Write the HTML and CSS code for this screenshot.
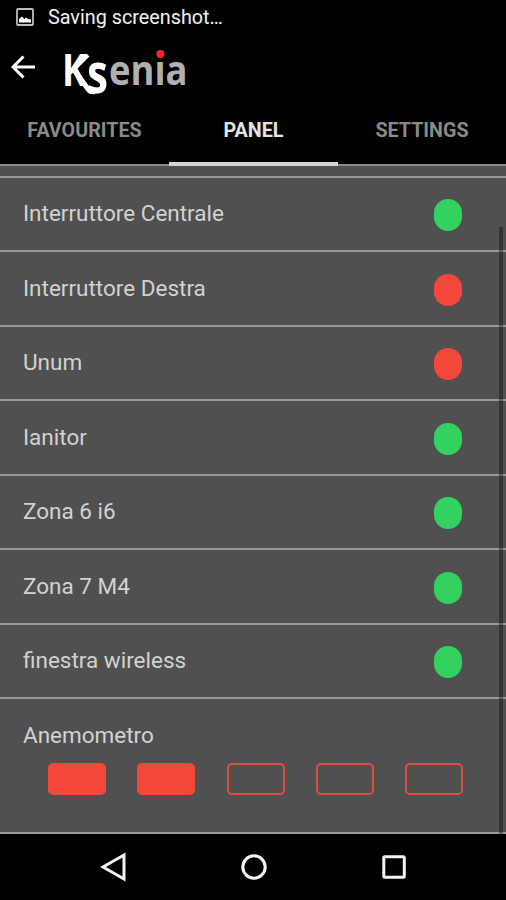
FILE: index.html
```html
<!DOCTYPE html>
<html lang="en">
<head>
    <meta charset="UTF-8">
    <meta name="viewport" content="width=device-width, initial-scale=1.0">
    <title>Ksenia</title>
    <link rel="stylesheet" href="styles.css">
</head>
<body>
    <div class="statusbar">
        <svg width="18" height="18" viewBox="0 0 18 18">
            <rect x="1" y="1" width="16" height="16" rx="1" fill="none" stroke="#bdbdbd" stroke-width="1.800"/>
            <path d="M3 14.500V11l3-2.500 2.500 2.500 1.500-1.500 2 1.500 3 0.500v3z" fill="#fff"/>
        </svg>
        <span class="statustext">Saving screenshot…</span>
    </div>
    <div class="header">
        <svg class="back" width="24" height="24" viewBox="0 0 24 24" fill="none" stroke="#fff" stroke-width="3">
            <path d="M12.500 1.500L2 12l10.500 10.500M2.500 12H24"/>
        </svg>
        <svg class="logo" width="150" height="76" viewBox="0 0 150 76">
            <text class="logo-k" x="7" y="51.500" textLength="24.500" lengthAdjust="spacingAndGlyphs">K</text>
            <text class="logo-s" x="32" y="59" textLength="21" lengthAdjust="spacingAndGlyphs">s</text>
            <!-- leg of the K runs into the tail of the s -->
            <path d="M18 34L33 55Q35 58.500 40 57.500" fill="none" stroke="#fff" stroke-width="5"/>
            <path d="M19 35L33 21" fill="none" stroke="#fff" stroke-width="4"/>
            <text class="logo-e" x="54" y="51" textLength="78.500" lengthAdjust="spacingAndGlyphs">enia</text>
            <rect x="99" y="10" width="13" height="16" fill="#000"/>
            <circle cx="105.500" cy="20" r="4" fill="#ee2a20"/>
        </svg>
    </div>
    <div class="tabs">
        <div class="tab">FAVOURITES</div>
        <div class="tab active">PANEL</div>
        <div class="tab">SETTINGS</div>
    </div>
    <div class="content">
        <ul class="zones">
            <li class="zone"><span>Interruttore Centrale</span><i class="dot green"></i></li>
            <li class="zone"><span>Interruttore Destra</span><i class="dot red"></i></li>
            <li class="zone"><span>Unum</span><i class="dot red"></i></li>
            <li class="zone"><span>Ianitor</span><i class="dot green"></i></li>
            <li class="zone"><span>Zona 6 i6</span><i class="dot green"></i></li>
            <li class="zone"><span>Zona 7 M4</span><i class="dot green"></i></li>
            <li class="zone"><span>finestra wireless</span><i class="dot green"></i></li>
            <li class="zone meter">
                <span>Anemometro</span>
                <div class="levels">
                    <i class="level on"></i>
                    <i class="level on"></i>
                    <i class="level"></i>
                    <i class="level"></i>
                    <i class="level"></i>
                </div>
            </li>
        </ul>
        <div class="scrollbar"></div>
    </div>
    <div class="navbar">
        <svg width="28" height="30" viewBox="0 0 28 30">
            <path d="M24 3v24L3 15z"/>
        </svg>
        <svg width="28" height="30" viewBox="0 0 28 30">
            <circle cx="14" cy="15" r="11.200"/>
        </svg>
        <svg width="28" height="30" viewBox="0 0 28 30">
            <rect x="3.800" y="4.800" width="20.500" height="20.500" rx="1"/>
        </svg>
    </div>
</body>
</html>
```
FILE: styles.css
```css
* {
    box-sizing: border-box;
}
body {
    margin: 0;
    height: 900px;
    display: flex;
    flex-direction: column;
    overflow: hidden;
    background-color: #000;
    color: #d2d2d2;
    font-family: Roboto, "Liberation Sans", sans-serif;
}
svg {
    display: block;
    flex: none;
}
.statusbar {
    height: 34px;
    display: flex;
    align-items: center;
    padding-left: 16px;
}
.statustext {
    margin-left: 14px;
    font-size: 19.8px;
    color: #f2f2f2;
}
.header {
    height: 66px;
    display: flex;
    align-items: flex-start;
    padding-left: 11px;
}
.back {
    margin-top: 21px;
}
.logo {
    margin-left: 20px;
    overflow: visible;
}
.logo text {
    font-family: "Open Sans", "Noto Sans", sans-serif;
    font-weight: 700;
}
.logo-k {
    font-size: 44px;
    fill: #fff;
}
.logo-s {
    font-size: 56px;
    fill: #fff;
}
.logo-e {
    font-size: 41px;
    fill: #b0b0b0;
}
.tabs {
    height: 66px;
    display: grid;
    grid-template-columns: 169px 169px 168px;
    border-bottom: 2px solid #8c8c8c;
    flex: none;
}
.tab {
    height: 66px;
    padding-top: 19px;
    text-align: center;
    font-size: 19.7px;
    line-height: 24px;
    font-weight: 700;
    color: #8a8a8a;
}
.active {
    color: #e4e4e4;
    border-bottom: 4px solid #d4d4d4;
}
.content {
    position: relative;
    height: 668px;
    padding-top: 9.6px;
    background-color: #505050;
}
.zones {
    list-style: none;
    margin: 0;
    padding: 0;
    border-top: 2px solid #979797;
}
.zone {
    height: 74.5px;
    display: flex;
    justify-content: space-between;
    padding: 21.6px 44px 0 23px;
    border-bottom: 2px solid #979797;
    font-size: 22.5px;
    line-height: 28px;
}
.dot {
    width: 28px;
    height: 32px;
    border-radius: 14px;
}
.green {
    background-color: #33d160;
}
.red {
    background-color: #f2473a;
}
.meter {
    height: 134.8px;
    flex-direction: column;
    justify-content: flex-start;
}
.levels {
    display: flex;
    justify-content: space-between;
    padding-left: 25px;
    margin: 14.4px -1px 0 0;
}
.level {
    width: 58px;
    height: 32px;
    border: 2px solid #dc4d48;
    border-radius: 5px;
}
.on {
    background-color: #f2473a;
    border-color: #f2473a;
}
.scrollbar {
    position: absolute;
    top: 61px;
    right: 3px;
    bottom: 0;
    width: 4px;
    background-color: rgba(0, 0, 0, 0.35);
}
.navbar {
    height: 66px;
    display: flex;
    justify-content: center;
    align-items: center;
    gap: 112px;
    padding-left: 2px;
}
.navbar svg {
    fill: none;
    stroke: #f4f4f4;
    stroke-width: 3;
}
```
